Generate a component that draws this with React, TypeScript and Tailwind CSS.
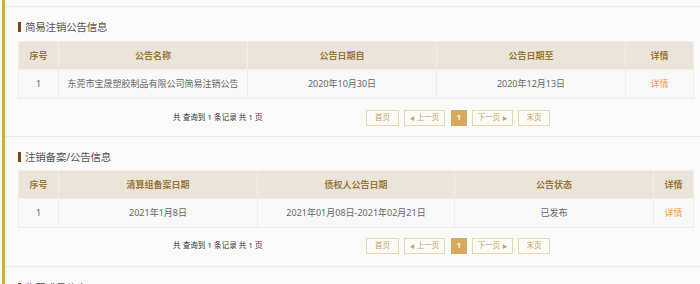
import React from "react";

const font = { fontFamily: '"Noto Sans", "Noto Sans CJK SC", sans-serif' };

type Col = { title: string; w: string };

function Title({ text }: { text: string }) {
  return (
    <div className="flex items-center h-[14px] ml-[13px]">
      <span className="w-[3px] h-[10px] bg-[#7b4a1c] mr-[4px]" />
      <span className="text-[10.5px] text-[#555] leading-none tracking-[-0.2px]">{text}</span>
    </div>
  );
}

function Table({ cols, row }: { cols: Col[]; row: React.ReactNode[] }) {
  return (
    <table className="table-fixed border-collapse w-[675px] ml-[13px]">
      <colgroup>
        {cols.map((c, i) => (
          <col key={i} className={c.w} />
        ))}
      </colgroup>
      <thead>
        <tr className="h-[28px] bg-[#ebe4d9]">
          {cols.map((c, i) => (
            <th
              key={i}
              className="border border-[#f3efe8] text-[9px] font-bold text-[#9a7738] text-center p-0"
            >
              {c.title}
            </th>
          ))}
        </tr>
      </thead>
      <tbody>
        <tr className="h-[29px] bg-[#f8f8f8]">
          {row.map((v, i) => (
            <td
              key={i}
              className={`border border-[#ededed] text-[9px] text-center p-0 ${
                i === row.length - 1 ? "text-[#f59a4f]" : "text-[#666]"
              }`}
            >
              {v}
            </td>
          ))}
        </tr>
      </tbody>
    </table>
  );
}

function Btn({ children, w, active }: { children: React.ReactNode; w: string; active?: boolean }) {
  return (
    <div
      className={`${w} h-[16px] flex items-center justify-center text-[7.5px] leading-none ${
        active
          ? "bg-[#d4aa5e] text-white font-bold"
          : "border-[1.5px] border-[#e9d6b2] text-[#c4a263] bg-[#fcfbf8]"
      }`}
    >
      {children}
    </div>
  );
}

function Pager() {
  return (
    <div className="flex items-center ml-[168px] h-[16px]">
      <span className="w-[90px] text-[7.5px] text-[#333] whitespace-nowrap tracking-[0.1px]">
        共 查询到 1 条记录 共 1 页
      </span>
      <div className="flex items-center ml-[103px]">
        <Btn w="w-[33px]">首页</Btn>
        <div className="w-[5px]" />
        <Btn w="w-[41px]">
          <span className="text-[5px] mr-[2px]">◀</span>上一页
        </Btn>
        <div className="w-[6px]" />
        <Btn w="w-[16px]" active>
          1
        </Btn>
        <div className="w-[5px]" />
        <Btn w="w-[41px]">
          下一页<span className="text-[5px] ml-[2px]">▶</span>
        </Btn>
        <div className="w-[5px]" />
        <Btn w="w-[32px]">末页</Btn>
      </div>
    </div>
  );
}

export default function App() {
  return (
    <div className="w-[700px] h-[284px] overflow-hidden bg-[#f7f7f7] flex" style={font}>
      <div className="w-[2px] shrink-0 bg-[#f7f7f7]" />
      <div className="w-[3px] shrink-0 bg-[#d6a74a]" />
      <div className="flex-1 bg-[#fafafa]">
        <div className="h-[7px] border-b border-[#ececec]" />
        <div className="pt-[13px] pb-[10px] border-b border-[#ececec]">
          <Title text="简易注销公告信息" />
          <div className="h-[7px]" />
          <Table
            cols={[
              { title: "序号", w: "w-[40px]" },
              { title: "公告名称", w: "w-[189px]" },
              { title: "公告日期自", w: "w-[189px]" },
              { title: "公告日期至", w: "w-[189px]" },
              { title: "详情", w: "w-[68px]" },
            ]}
            row={["1", "东莞市宝晟塑胶制品有限公司简易注销公告", "2020年10月30日", "2020年12月13日", "详情"]}
          />
          <div className="h-[11px]" />
          <Pager />
        </div>
        <div className="pt-[13px] pb-[12px] border-b border-[#ececec]">
          <Title text="注销备案/公告信息" />
          <div className="h-[6px]" />
          <Table
            cols={[
              { title: "序号", w: "w-[40px]" },
              { title: "清算组备案日期", w: "w-[199px]" },
              { title: "债权人公告日期", w: "w-[197px]" },
              { title: "公告状态", w: "w-[199px]" },
              { title: "详情", w: "w-[40px]" },
            ]}
            row={["1", "2021年1月8日", "2021年01月08日-2021年02月21日", "已发布", "详情"]}
          />
          <div className="h-[10px]" />
          <Pager />
        </div>
        <div className="pt-[14px]">
          <Title text="集团成员信息" />
        </div>
      </div>
    </div>
  );
}
